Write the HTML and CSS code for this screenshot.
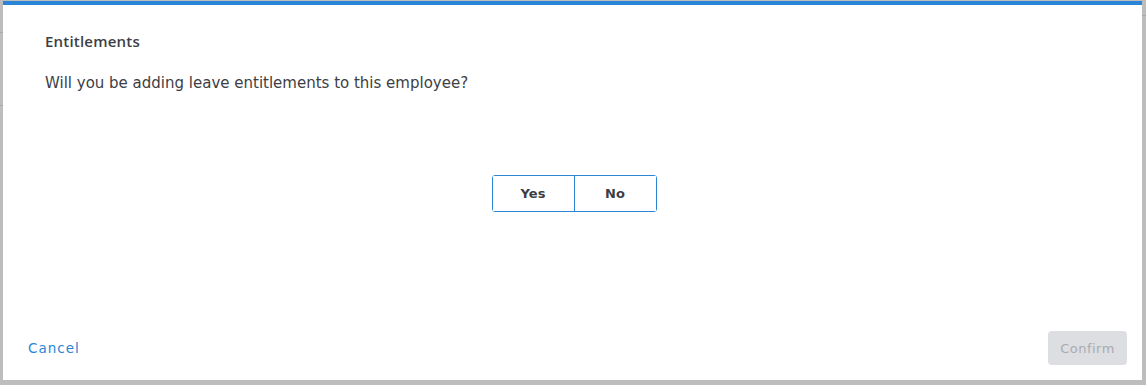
FILE: index.html
```html
<!DOCTYPE html>
<html lang="en">
<head>
    <meta charset="UTF-8">
    <meta name="viewport" content="width=device-width, initial-scale=1.0">
    <title>Entitlements</title>
    <link rel="stylesheet" href="styles.css">
</head>
<body>
    <div class="backdrop">
        <div class="edge-line left-a"></div>
        <div class="edge-line left-b"></div>
        <div class="edge-line right-a"></div>
    </div>
    <div class="modal">
        <div class="modal-body">
            <div class="modal-title">Entitlements</div>
            <div class="question">Will you be adding leave entitlements to this employee?</div>
            <div class="choice">
                <div class="toggle">
                    <button class="toggle-btn">Yes</button>
                    <button class="toggle-btn">No</button>
                </div>
            </div>
        </div>
        <div class="modal-footer">
            <button class="link-btn">Cancel</button>
            <button class="confirm-btn" disabled>Confirm</button>
        </div>
    </div>
</body>
</html>
```

FILE: styles.css
```css
html, body {
    margin: 0;
    height: 100%;
}
body {
    font-family: "DejaVu Sans", "Open Sans", sans-serif;
    background-color: #b9b9b9;
    color: #3d3e45;
    padding: 1px 4px 5px 3px;
    box-sizing: border-box;
}
.backdrop {
    position: absolute;
    inset: 0;
    background-color: #bdbdbd;
}
.edge-line {
    position: absolute;
    height: 1px;
    background-color: #a8a8a8;
}
.left-a { left: 0; width: 3px; top: 32px; }
.left-b { left: 0; width: 3px; top: 105px; }
.right-a { right: 0; width: 4px; top: 15px; }
.modal {
    position: relative;
    height: 379px;
    background-color: #fff;
    border-top: 4px solid #2a85d6;
    box-sizing: border-box;
    display: flex;
    flex-direction: column;
}
.modal-body {
    flex: 1;
    padding: 0 41px 0 42px;
}
.modal-title {
    font-family: "Open Sans", "DejaVu Sans", sans-serif;
    font-size: 15px;
    font-weight: 600;
    margin-top: 26px;
    line-height: 20px;
    letter-spacing: 0.2px;
}
.question {
    font-size: 15px;
    margin-top: 21px;
    line-height: 22px;
}
.choice {
    display: flex;
    justify-content: center;
    margin-top: 81px;
}
.toggle {
    display: flex;
    border: 1px solid #2a85d6;
    border-radius: 3px;
    margin-left: 2px;
}
.toggle-btn {
    width: 81px;
    height: 35px;
    padding: 0;
    border: none;
    background: #fff;
    font-family: inherit;
    font-size: 13px;
    font-weight: 600;
    color: #3d3e45;
    cursor: pointer;
}
.toggle-btn + .toggle-btn {
    width: 82px;
    border-left: 1px solid #2a85d6;
}
.modal-footer {
    display: flex;
    justify-content: space-between;
    align-items: center;
    padding: 0 15px 15px 25px;
}
.link-btn {
    border: none;
    background: none;
    padding: 0;
    font-family: inherit;
    font-size: 13.5px;
    font-weight: 500;
    letter-spacing: 1px;
    color: #2a85d6;
    cursor: pointer;
}
.confirm-btn {
    width: 79px;
    height: 34px;
    border: none;
    border-radius: 4px;
    background-color: #dcdee2;
    color: #a9abb1;
    font-family: inherit;
    font-size: 13px;
    font-weight: 500;
    letter-spacing: 0.5px;
}
```
